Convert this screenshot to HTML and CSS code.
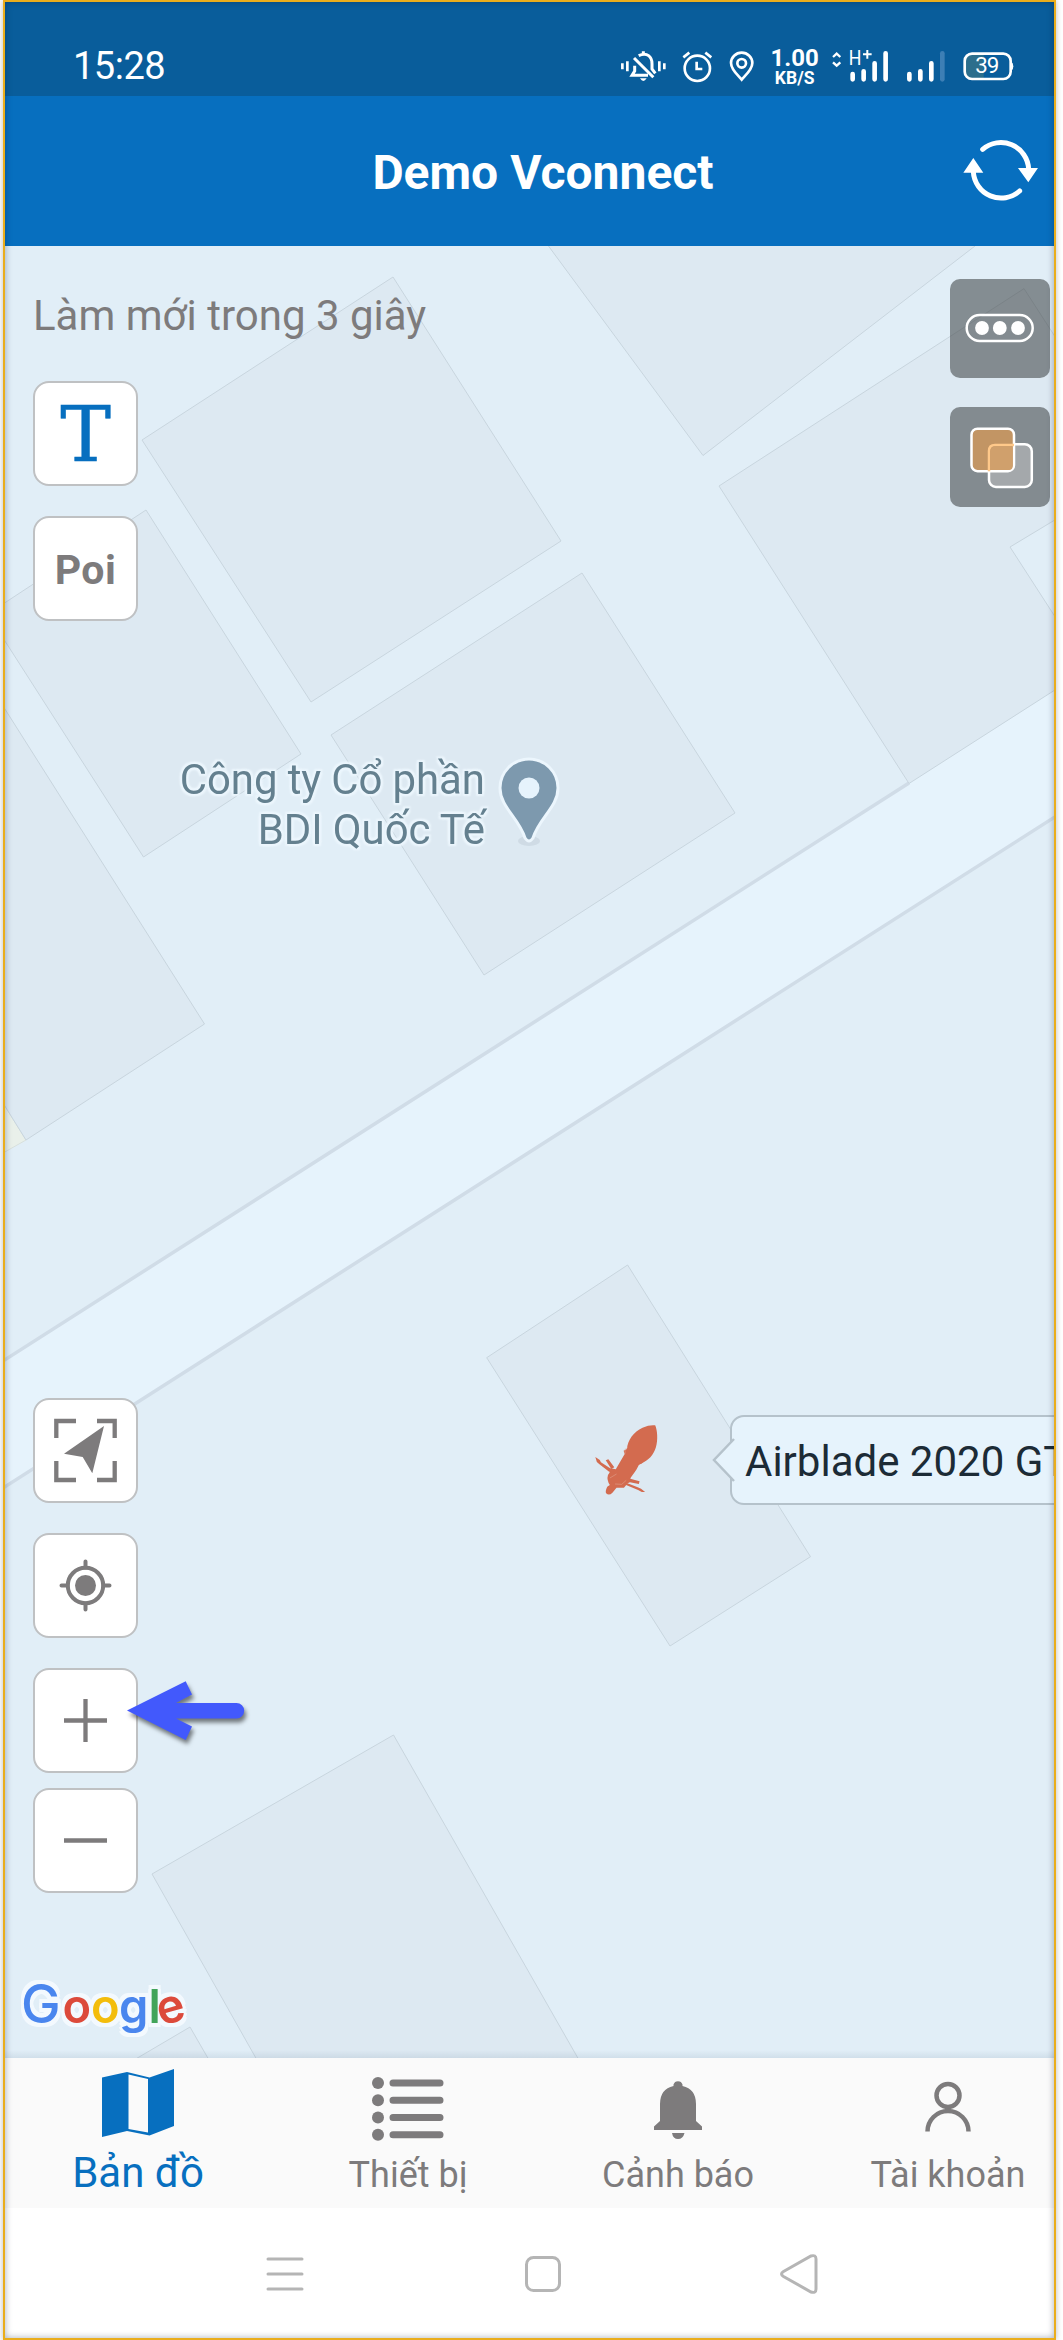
FILE: index.html
```html
<!DOCTYPE html>
<html lang="vi">
<head>
<meta charset="utf-8">
<title>Demo Vconnect</title>
<link rel="stylesheet" href="styles.css">
</head>
<body>
<div class="frame">
<div class="screen">
  <div class="status">
    <span class="clock">15:28</span>
    <div class="status-icons">
      <svg class="ic-bell" viewBox="60 140 140 115" fill="none" stroke="#fff" stroke-width="8">
        <path d="M67 189v18M82 183v30M178 183v30M193 189v18"/>
        <path d="M102 173 160 231M130 153v8M116 166c26-12 40 4 40 24v16l10 13M104 196v16l-8 13h46M94 225h50" stroke-width="9"/>
        <path d="M120 234h20q-10 16-20 0z" fill="#fff" stroke="none"/>
      </svg>
      <svg class="ic-alarm" viewBox="245 140 100 115" fill="none" stroke="#fff" stroke-width="8">
        <circle cx="294" cy="204" r="38"/><path d="M252 171l18-14M336 171l-18-14M292 184v22h17"/>
      </svg>
      <svg class="ic-place" viewBox="385 140 80 115" fill="none" stroke="#fff" stroke-width="8">
        <path d="M426 238c-12-14-32-30-32-50a32 31 0 0 1 64 0c0 20-20 36-32 50z"/><circle cx="426" cy="189" r="13"/>
      </svg>
      <div class="speed"><b>1.00</b><span>KB/S</span></div>
      <svg class="ic-cell" viewBox="695 140 175 115" fill="none" stroke="#fff">
        <path d="M701 170l11-10 11 10M701 186l11 10 11-10" stroke-width="7"/>
        <path d="M760 221v16M793 213v24M826 189v48M859 159v78" stroke-width="14" stroke-linecap="round"/>
        <text x="748" y="195" font-size="60" textLength="38" lengthAdjust="spacingAndGlyphs" fill="#fff" stroke="none">H</text>
        <path d="M804 149v26M791 162h26" stroke-width="6"/>
      </svg>
      <svg class="ic-sim" viewBox="915 140 125 115" fill="none" stroke="#fff" stroke-width="14" stroke-linecap="round">
        <path d="M928 221v16M961 213v24M994 189v48"/><path d="M1027 159v78" stroke="#3d7fb5"/>
      </svg>
      <svg class="ic-batt" viewBox="1088 140 158 115">
        <path d="M1115 164h38v72h-38q-17 0-17-17v-38q0-17 17-17z" fill="#2c6e8c"/>
        <rect x="1096" y="160" width="138" height="76" rx="22" fill="none" stroke="#fff" stroke-width="8"/>
        <path d="M1236 184q6 3 6 14t-6 14z" fill="#fff"/>
        <text x="1128" y="219" font-size="67" textLength="72" fill="#fff">39</text>
      </svg>
    </div>
  </div>

  <header class="header">
    <h1>Demo Vconnect</h1>
    <svg class="refresh" viewBox="1085 415 235 195" fill="none" stroke="#fff" stroke-width="15" stroke-linecap="round">
      <path d="M1147 449A83.5 83.5 0 0 1 1285 508M1258 574A83.5 83.5 0 0 1 1119 516"/>
      <path d="M1089 519h60l-30-44zM1253 505h60l-29 43z" fill="#fff" stroke="none"/>
    </svg>
  </header>

  <main class="map">
    <svg class="tiles" viewBox="3 246 1080 1812">
      <path d="M3 1361 909 783 1083 672V799L3 1488z" fill="#e6f3fc"/>
      <path d="M3 1361 909 783M3 1488 1083 799" fill="none" stroke="#d0dce7" stroke-width="3.5"/>
      <path d="M3 1103 26 1140 3 1153z" fill="#e9f0ea" stroke="#d8e0dc"/>
      <g fill="#dde9f2" stroke="#c8d5de" stroke-width="1">
        <path d="M393 277 561 541 311 702 142 440z"/>
        <path d="M146 510 301 754 143.500 857 3 638V604z"/>
        <path d="M3 706 204.500 1024 26 1140 3 1103z"/>
        <path d="M582 573 735 813 484 975 331 735z"/>
        <path d="M547 244 703 455.500 975 246V240z"/>
        <path d="M719 486 1024 288.600 1083 380V503L1010 547 1083 660V672L909 783.500z"/>
        <path d="M627.600 1265 810.500 1556.700 670 1646 486.700 1357.700z"/>
        <path d="M393.500 1735 579 2060H257L152 1874z"/>
        <path d="M190 2027 209 2060H134z"/>
      </g>
    </svg>

    <div class="place">
      <p>Công ty Cổ phần<br>BDI Quốc Tế</p>
      <svg viewBox="0 0 66 94">
        <ellipse cx="33" cy="86" rx="11" ry="5" fill="#cfdbe5"/>
        <path d="M33 4a29 29 0 0 1 29 29c0 19-19 30-25 50q-4 6-8 0C23 63 4 52 4 33A29 29 0 0 1 33 4z" fill="#7d99ae" stroke="#ecf6fd" stroke-width="3"/>
        <circle cx="33" cy="33" r="10.500" fill="#e6f3fc"/>
      </svg>
    </div>

    <svg class="bike" viewBox="300 510 190 240" preserveAspectRatio="none" fill="#d36b4f">
      <path d="M470 526C476 540 478 570 472 592 466 615 452 632 432 641L426 645C418 665 408 675 403 686L428 694 426 702 402 697 396 700 386 713H366L355 728Q346 738 338 730 335 724 341 710L348 705Q339 690 343 675L347 668 350 655 364 658 388 612 385 602 394 597C396 570 412 545 436 533Q455 524 470 526z"/>
      <path d="M309 621 321 630 324 637 353 658 347 666 320 643 313 636zM337 631 344 628 360 652 352 657zM392 698 423 712 432 716 443 726 434 726 424 720 390 704zM428 632 440 628 435 640 426 643z"/>
      <path d="M348 684l18-12M362 702l18 1 12-12M389 611v-13l7-5" fill="none" stroke="#e3a593" stroke-width="1.500"/>
    </svg>

    <div class="bubble">
      <svg viewBox="0 0 24 46"><path d="M22 2 2 23 22 44H25V2z" fill="#e6f3fc"/><path d="M22 2 2 23 22 44" fill="none" stroke="#b5c2cb" stroke-width="2.500"/></svg>
      <span>Airblade 2020 GT</span>
    </div>

    <div class="controls controls-top">
      <p class="countdown">Làm mới trong 3 giây</p>
      <button class="btn btn-t">T</button>
      <button class="btn btn-poi">Poi</button>
    </div>

    <div class="controls controls-bottom">
      <button class="btn"><svg viewBox="2 2 101 101"><path d="M43 23H23.300V40M64 23H81.700V40M43 82H23.300V63M64 82H81.700V63" fill="none" stroke="#7d7b7c" stroke-width="4.300"/><path d="M71 28 31 55.700 49.700 59 59.300 75.300z" fill="#7d7b7c"/></svg></button>
      <button class="btn"><svg viewBox="2 2 101 101" fill="none" stroke="#7d7b7c" stroke-width="4"><circle cx="52.500" cy="52.500" r="17.700"/><circle cx="52.500" cy="52.500" r="10.500" fill="#7d7b7c" stroke="none"/><path d="M52.500 28.500v6M52.500 70.500v6M28.500 52.500h6M70.500 52.500h6" stroke-linecap="round"/></svg></button>
      <button class="btn"><svg viewBox="2 2 101 101"><path d="M31 52.500H74M52.500 31V74" stroke="#7d7b7c" stroke-width="4.300"/></svg></button>
      <button class="btn btn-minus"><svg viewBox="2 2 101 101"><path d="M31 52.500H74" stroke="#7d7b7c" stroke-width="4.300"/></svg></button>
    </div>

    <div class="layers">
      <button><svg viewBox="0 0 100 100"><rect x="16.700" y="36" width="66" height="26" rx="13" fill="none" stroke="#fff" stroke-width="2.500"/><g fill="#fff"><circle cx="32" cy="49" r="6.900"/><circle cx="49.800" cy="49" r="6.900"/><circle cx="68" cy="49" r="6.900"/></g></svg></button>
      <button><svg viewBox="0 0 100 100"><rect x="39" y="37.200" width="42.800" height="42.800" rx="7" fill="#a4a8ab" stroke="#fff" stroke-width="2.500"/><rect x="21.500" y="21.700" width="42.500" height="42.500" rx="6" fill="#c29564" stroke="#fff" stroke-width="2.500"/><path d="M64 38H45q-6 0-6 6v20.200" fill="none" stroke="#ffc98a" stroke-width="2.500"/><path d="M62.700 39.200H46q-5.700 0-5.700 5.700V63H59q3.700 0 3.700-4z" fill="#d0a06c"/></svg></button>
    </div>

    <svg class="pointer" viewBox="120 1675 135 80"><path d="M127 1710.600 185.700 1681.300 192 1694.400 176 1703H236.500a7.700 7.700 0 0 1 0 15.400H176L192 1726.500 185.700 1740z" fill="#4259fc"/></svg>

    <svg class="google" viewBox="0 0 180 70">
      <text y="49"><tspan class="g-cap g-blue" x="4">G</tspan><tspan class="g-red" x="45.500">o</tspan><tspan class="g-yellow" x="74">o</tspan><tspan class="g-blue" x="102">g</tspan><tspan class="g-green" x="131.500">l</tspan><tspan class="g-red" x="144" y="52" rotate="-16">e</tspan></text>
    </svg>
  </main>

  <nav class="tabs">
    <a class="tab tab-active">
      <svg viewBox="0 0 72 68"><path d="M0 8.500 25 3 47.500 8.500 72 0V57L47.500 66.500 25 62 0 68z" fill="#076fbf"/><path d="M26.500 5.500 46 10V63.500L26.500 60z" fill="#fafafa"/></svg>
      <span>Bản đồ</span>
    </a>
    <a class="tab">
      <svg viewBox="0 0 72 68" fill="#7d7b7c"><circle cx="6" cy="14" r="6"/><circle cx="6" cy="31.300" r="6"/><circle cx="6" cy="48.500" r="6"/><circle cx="6" cy="65.700" r="6"/><path d="M21 14H68M21 31.300H68M21 48.500H68M21 65.700H68" stroke="#7d7b7c" stroke-width="7" stroke-linecap="round"/></svg>
      <span>Thiết bị</span>
    </a>
    <a class="tab">
      <svg viewBox="0 0 72 68" fill="#7d7b7c"><path d="M31.500 17V15.500a4.700 4.700 0 0 1 9 0V17Q54 20 54 35V52L60 57.500V61H12V57.500L18 52V35Q18 20 31.500 17zM30 64H42.500Q41 70 36 70T30 64z"/></svg>
      <span>Cảnh báo</span>
    </a>
    <a class="tab">
      <svg viewBox="0 0 72 68" fill="none" stroke="#7d7b7c" stroke-width="4.500"><circle cx="36" cy="26.500" r="11.500"/><path d="M15.500 62.500a20.500 20.500 0 0 1 41 0"/></svg>
      <span>Tài khoản</span>
    </a>
  </nav>

  <footer class="sysnav">
    <svg viewBox="0 0 42 42"><path d="M4 6H38M4 21H38M4 36H38"/></svg>
    <svg viewBox="0 0 42 42"><rect x="4.500" y="4.500" width="33" height="33" rx="7"/></svg>
    <svg viewBox="0 0 42 42"><path d="M5.500 18.500 33 3Q38 1.500 38 6V36Q38 40.500 33 39L5.500 23.500Q1.500 21 5.500 18.500z"/></svg>
  </footer>
</div>
</div>
</body>
</html>
```

FILE: styles.css
```css
* { box-sizing: border-box; }

body {
  margin: 0;
  background: #fff;
  font-family: Roboto, "Liberation Sans", sans-serif;
}

svg { display: block; overflow: visible; }
p, h1 { margin: 0; }

.frame {
  position: relative;
  width: 1053px;
  height: 2340px;
  margin-left: 3px;
  border: 2px solid #eaad1c;
  box-shadow: 0 0 6px rgba(90, 90, 90, .4);
  overflow: hidden;
}

.frame::after {
  content: "";
  position: absolute;
  inset: 0;
  box-shadow: inset 0 0 7px rgba(0, 20, 50, .35);
}

.screen {
  width: 1080px;
  height: 2336px;
  margin-left: -2px;
  display: flex;
  flex-direction: column;
}

/* status bar */
.status {
  height: 94px;
  background: #095d9b;
  color: #fff;
  display: flex;
  justify-content: space-between;
  padding: 0 68px 0 70px;
}

.clock { font-size: 38px; line-height: 44px; margin-top: 42px; letter-spacing: -.5px; }

.status-icons { display: flex; margin-top: 44.600px; }
.status-icons svg { height: 38.300px; flex: none; }
.ic-bell { width: 46.700px; margin-right: 15px; }
.ic-alarm { width: 33.300px; margin-right: 13.300px; }
.ic-place { width: 26.700px; margin-right: 15px; }
.ic-cell { width: 58.300px; margin-right: 15px; }
.ic-sim { width: 41.700px; margin-right: 16px; }
.ic-batt { width: 52.700px; }

.speed {
  width: 50px;
  margin-right: 11.700px;
  display: flex;
  flex-direction: column;
  align-items: center;
  white-space: nowrap;
}
.speed b { font-size: 24px; line-height: 20px; font-weight: 700; margin-top: 1px; }
.speed span { font-size: 17.500px; line-height: 18px; font-weight: 700; margin-top: 1px; }

/* app header */
.header {
  position: relative;
  height: 150px;
  background: #076fbf;
  color: #fff;
  display: flex;
  align-items: center;
  justify-content: center;
}
.header h1 { font-size: 48px; line-height: 56px; font-weight: 700; padding-top: 4px; }
.refresh { position: absolute; left: 958.700px; top: 42.300px; width: 78.300px; height: 65px; }

/* map */
.map {
  position: relative;
  height: 1812px;
  background: #e1eef7;
  overflow: hidden;
}
.map::after {
  content: "";
  position: absolute;
  left: 0;
  right: 0;
  bottom: 0;
  height: 8px;
  background: linear-gradient(transparent, rgba(60, 90, 120, .1));
}
.tiles { width: 1080px; height: 1812px; }

.place {
  position: absolute;
  right: 521px;
  top: 509px;
  display: flex;
  gap: 11px;
  color: #64808f;
}
.place p {
  margin-top: -1px;
  font-size: 43px;
  line-height: 50px;
  letter-spacing: -.1px;
  text-align: right;
  white-space: nowrap;
  transform: scaleX(.975);
  transform-origin: right;
  text-shadow: 0 0 3px #ecf6fd, 2px 2px 2px #ecf6fd, -2px -2px 2px #ecf6fd, 2px -2px 2px #ecf6fd, -2px 2px 2px #ecf6fd;
}
.place svg { width: 66px; height: 94px; }

.bike { position: absolute; left: 588.500px; top: 1174px; width: 70.600px; height: 80px; }

.bubble {
  position: absolute;
  left: 727px;
  top: 1169px;
  width: 380px;
  height: 90px;
  padding: 1px 13px;
  border: 2px solid #b5c2cb;
  border-radius: 14px;
  background: #e6f3fc;
  color: #1c2b36;
  font-size: 42px;
  line-height: 88px;
  white-space: nowrap;
}
.bubble svg { position: absolute; left: -20px; top: 20px; width: 24px; height: 46px; }

.controls {
  position: absolute;
  left: 30px;
  display: flex;
  flex-direction: column;
  align-items: flex-start;
  gap: 30px;
}
.controls-top { top: 45px; }
.controls-bottom { top: 1152px; }

.countdown { font-size: 42px; line-height: 50px; margin-bottom: 10px; color: #7d7b7c; white-space: nowrap; }

.btn {
  width: 105px;
  height: 105px;
  padding: 0;
  border: 2px solid #bfc1c3;
  border-radius: 16px;
  background: #fff;
  color: #7d7b7c;
  display: flex;
  align-items: center;
  justify-content: center;
}
.btn svg { width: 101px; height: 101px; }
.btn-minus { margin-top: -15px; }
.btn-t {
  padding-top: 3px;
  font: 76px/96px "DejaVu Serif", serif;
  color: #076fbf;
  -webkit-text-stroke: .600px #076fbf;
}
.btn-poi { padding-top: 3px; font: 700 41px/48px Roboto, sans-serif; letter-spacing: .5px; }

.layers {
  position: absolute;
  left: 947px;
  top: 32.500px;
  display: flex;
  flex-direction: column;
  gap: 29px;
}
.layers button {
  width: 100px;
  height: 99.500px;
  padding: 0;
  border: 0;
  border-radius: 10px;
  background: rgba(65, 70, 73, .58);
}
.layers svg { width: 100px; height: 100px; }

.pointer {
  position: absolute;
  left: 117px;
  top: 1429px;
  width: 135px;
  height: 80px;
  filter: drop-shadow(2px 4px 2px rgba(0, 0, 0, .5));
}

.google {
  position: absolute;
  left: 14px;
  top: 1728px;
  width: 180px;
  height: 70px;
  font: 600 47px Inter, sans-serif;
  filter: drop-shadow(3px 0 0 #f3f9fe) drop-shadow(-3px 0 0 #f3f9fe) drop-shadow(0 4px 0 #f3f9fe) drop-shadow(0 -4px 0 #f3f9fe);
}
.g-cap { font-size: 53px; font-weight: 500; }
.g-blue { fill: #4a86ee; }
.g-red { fill: #dc4a3b; }
.g-yellow { fill: #f3bd0c; }
.g-green { fill: #41a45a; }

/* bottom tabs */
.tabs {
  height: 150px;
  background: #fafafa;
  display: grid;
  grid-template-columns: repeat(4, 270px);
}
.tab {
  padding-top: 11px;
  display: flex;
  flex-direction: column;
  align-items: center;
  color: #7d7b7c;
  font-size: 36px;
  line-height: 44px;
}
.tab svg { width: 72px; height: 68px; margin-bottom: 16px; }
.tab span { white-space: nowrap; }
.tab-active { color: #076fbf; font-size: 42px; }
.tab-active span { margin-top: -2px; }

/* system navigation */
.sysnav {
  height: 130px;
  background: #fff;
  display: flex;
  align-items: flex-start;
  gap: 216px;
  padding: 45px 0 0 261px;
}
.sysnav svg { width: 42px; height: 42px; fill: none; stroke: #b5b5b5; stroke-width: 3; stroke-linecap: round; }
.sysnav svg:last-child { margin-left: -2px; }
```
